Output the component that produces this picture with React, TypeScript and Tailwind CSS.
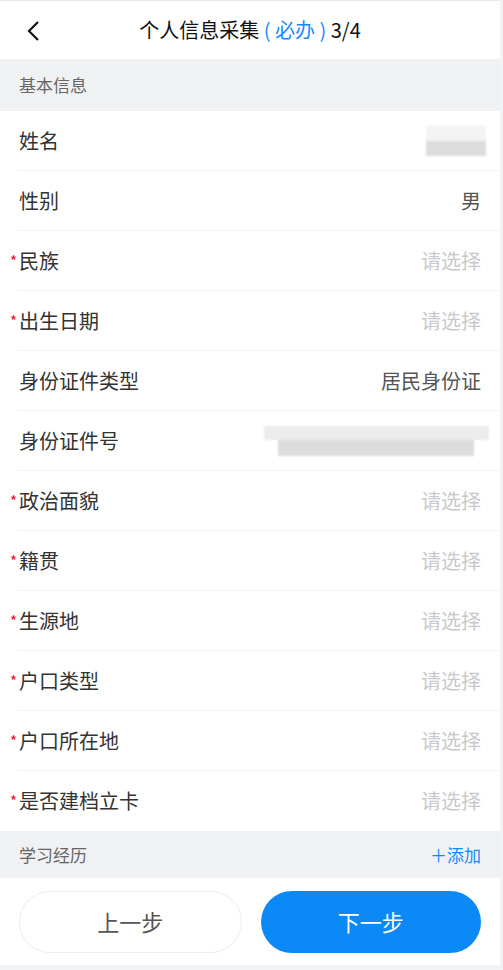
const FONT = "font-['Microsoft_YaHei','Noto_Sans_CJK_SC',sans-serif]";

type Field = { label: string; required?: boolean; value?: string; blur?: "name" | "id" };

const FIELDS: Field[] = [
  { label: "姓名", blur: "name" },
  { label: "性别", value: "男" },
  { label: "民族", required: true },
  { label: "出生日期", required: true },
  { label: "身份证件类型", value: "居民身份证" },
  { label: "身份证件号", blur: "id" },
  { label: "政治面貌", required: true },
  { label: "籍贯", required: true },
  { label: "生源地", required: true },
  { label: "户口类型", required: true },
  { label: "户口所在地", required: true },
  { label: "是否建档立卡", required: true },
];

function Blur({ kind }: { kind: "name" | "id" }) {
  if (kind === "name") {
    return (
      <div className="-mr-[5px] flex flex-col blur-[1px]">
        <div className="h-[15px] w-[60px] bg-[#f3f3f3]" />
        <div className="h-[15px] w-[60px] bg-[#dcdcdc]" />
      </div>
    );
  }
  return (
    <div className="-mr-[8px] flex flex-col blur-[1px]">
      <div className="h-[14px] w-[225px] bg-[#ececec]" />
      <div className="ml-[14px] h-[16px] w-[196px] bg-[#dcdcdc]" />
    </div>
  );
}

function Row({ f, last }: { f: Field; last: boolean }) {
  return (
    <div className="relative flex h-[60px] items-center justify-between bg-white pl-[19px] pr-[19px]">
      {f.required && (
        <span className="absolute left-[10px] top-[22px] text-[15px] leading-none text-[#ee0a24]">*</span>
      )}
      <span className="text-[20px] text-[#333]">{f.label}</span>
      {f.blur ? (
        <Blur kind={f.blur} />
      ) : (
        <span className={`text-[20px] ${f.value ? "text-[#555]" : "text-[#c8c9cc]"}`}>
          {f.value ?? "请选择"}
        </span>
      )}
      {!last && <div className="absolute bottom-0 left-[18px] right-0 h-px bg-[#f3f3f3]" />}
    </div>
  );
}

export default function App() {
  return (
    <div className={`${FONT} h-[970px] w-[503px] bg-[#f2f3f5]`}>
      <div className="w-[500px]">
        <div className="h-px bg-[#e8e8e8]" />
        {/* 顶部导航 */}
        <div className="relative flex h-[58px] items-center justify-center bg-white">
          <svg className="absolute left-[26px] top-[19px]" width="14" height="22" viewBox="0 0 14 22" fill="none">
            <path d="M12 2L3 11l9 9" stroke="#111" strokeWidth="2.2" />
          </svg>
          <div className="text-[20px] text-[#111]">
            个人信息采集<span className="text-[#1989fa]"> (&nbsp;必办&nbsp;) </span>3/4
          </div>
        </div>

        <div className="flex h-[52px] items-center bg-[#f0f1f3] px-[19px] text-[17px] text-[#666]">基本信息</div>

        <div>
          {FIELDS.map((f, i) => (
            <Row key={f.label} f={f} last={i === FIELDS.length - 1} />
          ))}
        </div>

        <div className="flex h-[47px] items-center justify-between bg-[#f0f1f3] px-[19px] text-[17px]">
          <span className="text-[#666]">学习经历</span>
          <span className="text-[#1989fa]">＋添加</span>
        </div>

        {/* 底部按钮 */}
        <div className="flex h-[87px] items-center gap-[19px] bg-white px-[19px]">
          <button className="h-[62px] flex-1 rounded-full border border-[#ebedf0] bg-white text-[22px] text-[#555]">
            上一步
          </button>
          <button className="h-[62px] flex-1 rounded-full bg-[#0a89f7] text-[22px] text-white">下一步</button>
        </div>
      </div>
    </div>
  );
}
